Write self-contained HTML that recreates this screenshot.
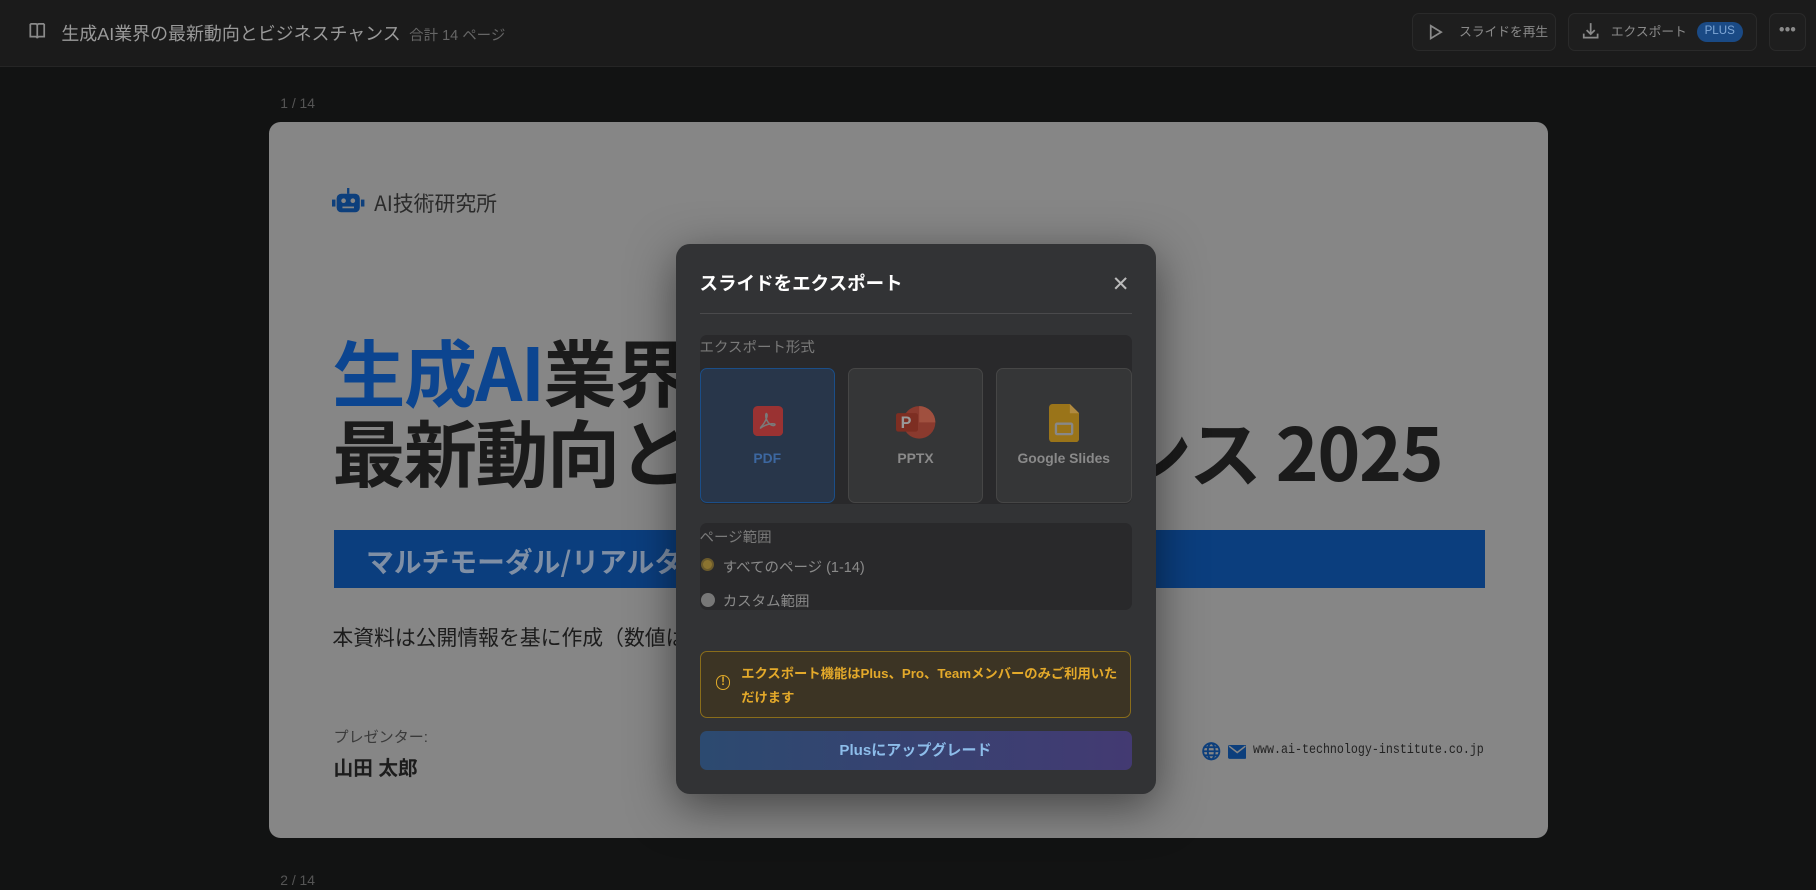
<!DOCTYPE html>
<html><head><meta charset="utf-8"><style>
html{zoom:1.158163}
body{margin:0;width:1568px;height:768px;overflow:hidden;background:#121313;font-family:"Liberation Sans","Noto Sans CJK JP",sans-serif;position:relative}
.a{position:absolute;white-space:nowrap}
.top{position:absolute;left:0;top:0;width:1568px;height:57px;background:#1b1b1b;border-bottom:1px solid #252525}
.btn{position:absolute;top:11px;height:31px;border:1px solid #2a2a2a;border-radius:6px;background:#1e1e1e;color:#8a8a8a;font-size:11px;line-height:31px}
.slide{position:absolute;left:232px;top:105px;width:1105px;height:619px;background:#868686;border-radius:10px}
.modal{position:absolute;left:584px;top:211px;width:414px;height:475px;background:#323335;border-radius:12px;box-shadow:0 10px 40px rgba(0,0,0,.5)}
.card{position:absolute;top:318px;width:117px;height:116px;border-radius:6px;background:#353637;border:1px solid #464646;box-sizing:border-box}
.card span{position:absolute;left:0;right:0;top:70px;text-align:center;font-size:12px;font-weight:bold;color:#8a8a8a}
</style></head><body>
<div class="top"></div>
<svg class="a" style="left:24px;top:18px" width="16" height="17" viewBox="0 0 16 17" fill="none" stroke="#8a8a8a" stroke-width="1.5"><path d="M8 3v12M2 2.5h4.5Q8 2.5 8 4M14 2.5H9.5Q8 2.5 8 4M2 2.5v11h4.5Q8 13.5 8 15M14 2.5v11H9.5Q8 13.5 8 15"/></svg>
<div class="a" style="left:53px;top:17px;font-size:15.5px;color:#9a9a9a">生成AI業界の最新動向とビジネスチャンス <span style="font-size:12.5px;color:#666;margin-left:3px">合計 14 ページ</span></div>
<div class="btn" style="left:1219px;width:123px"><svg class="a" style="left:14px;top:9px" width="12" height="14" viewBox="0 0 12 14" fill="none" stroke="#8a8a8a" stroke-width="1.5"><path d="M1.5 1.5l9 5.5-9 5.5z"/></svg><span class="a" style="left:40px">スライドを再生</span></div>
<div class="btn" style="left:1354px;width:161px"><svg class="a" style="left:11px;top:7px" width="15" height="15" viewBox="0 0 15 15" fill="none" stroke="#8a8a8a" stroke-width="1.5"><path d="M7.5 1v9M4 7l3.5 3.5L11 7M1.5 10v3.5h12V10"/></svg><span class="a" style="left:36px">エクスポート</span><span class="a" style="left:110px;top:7px;width:40px;height:17px;border-radius:9px;background:#1a4a85;color:#7fa7d6;font-size:10px;line-height:17px;text-align:center">PLUS</span></div>
<div class="btn" style="left:1527px;width:31px;text-align:center;font-size:14px;line-height:28px">•••</div>
<div class="a" style="left:242px;top:82px;font-size:12px;color:#555">1 / 14</div>
<div class="a" style="left:242px;top:753px;font-size:12px;color:#555">2 / 14</div>
<div class="slide">
<svg class="a" style="left:55px;top:57px" width="28" height="22" viewBox="0 0 28 22"><rect x="4" y="5" width="20" height="16" rx="4" fill="#0d3f7c"/><rect x="0" y="10" width="3" height="6" fill="#0d3f7c"/><rect x="25" y="10" width="3" height="6" fill="#0d3f7c"/><rect x="13" y="0" width="2" height="5" fill="#0d3f7c"/><circle cx="10" cy="11" r="2" fill="#868686"/><circle cx="18" cy="11" r="2" fill="#868686"/><rect x="9" y="16" width="10" height="1.5" fill="#868686"/></svg>
<div class="a" style="left:91px;top:57px;font-size:18px;color:#2a2a2a;font-family:'Noto Sans CJK JP',sans-serif">AI技術研究所</div>
<div class="a" style="left:55px;top:181px;font-size:63px;font-weight:bold;line-height:69px;color:#1b1b1b;letter-spacing:-1.2px;font-family:'Noto Sans CJK JP',sans-serif"><span style="color:#0c4590">生成AI</span>業界の<br>最新動向とビジネスチャンス 2025</div>
<div class="a" style="left:56px;top:353px;width:994px;height:50px;background:#0b3e7e"></div>
<div class="a" style="left:84px;top:362px;font-size:24px;font-weight:bold;color:#7f8fa5;font-family:'Noto Sans CJK JP',sans-serif">マルチモーダル/リアルタイム</div>
<div class="a" style="left:55px;top:432px;font-size:18px;color:#1c1c1c">本資料は公開情報を基に作成（数値は推</div>
<div class="a" style="left:56px;top:522px;font-size:13px;color:#3a3a3a">プレゼンター:</div>
<div class="a" style="left:56px;top:544px;font-size:17px;font-weight:bold;color:#1c1c1c">山田 太郎</div>
<svg class="a" style="left:806px;top:536px" width="16" height="16" viewBox="0 0 16 16" fill="none" stroke="#0d3f7c" stroke-width="1.6"><circle cx="8" cy="8" r="7"/><ellipse cx="8" cy="8" rx="3" ry="7"/><path d="M1 8h14M2 4.5h12M2 11.5h12"/></svg>
<svg class="a" style="left:828px;top:538px" width="16" height="12" viewBox="0 0 16 12"><rect width="16" height="12" rx="1.5" fill="#0d3f7c"/><path d="M1 1l7 5.5L15 1" stroke="#868686" stroke-width="1.3" fill="none"/></svg>
<div class="a" style="left:850px;top:536px;font-family:'Liberation Mono',monospace;font-size:12px;color:#222;transform:scaleX(0.84);transform-origin:left"> www.ai-technology-institute.co.jp</div>
</div>
<div class="modal"></div>
<div class="a" style="left:604px;top:233px;font-size:16px;font-weight:bold;color:#fff">スライドをエクスポート</div>
<div class="a" style="left:960px;top:235px;font-size:18px;color:#bbb">✕</div>
<div class="a" style="left:604px;top:270px;width:373px;height:1px;background:#4a4a4c"></div>
<div class="a" style="left:604px;top:289px;width:373px;height:146px;background:#29292b;border-radius:6px"></div>
<div class="a" style="left:604px;top:290px;font-size:12.5px;color:#7a7a7a">エクスポート形式</div>
<div class="card" style="left:604px;background:#28364a;border-color:#1b4e88"><svg class="a" style="left:45px;top:32px" width="26" height="26" viewBox="0 0 26 26"><rect width="26" height="26" rx="4" fill="#9a3232"/><path d="M7 18c3-3 6-9 5-11s-2 3 1 7 6 3 6 2-5-1-9 1-4 3-3 1z" fill="none" stroke="#7a7a7a" stroke-width="1.3"/></svg><span style="color:#3c67a0">PDF</span></div>
<div class="card" style="left:732px"><svg class="a" style="left:41px;top:31px" width="34" height="30" viewBox="0 0 34 30"><circle cx="20" cy="15" r="14" fill="#8a3a2e"/><path d="M20 1a14 14 0 0 1 14 14H20z" fill="#a0503f"/><rect x="0" y="7" width="19" height="16" rx="2" fill="#7d2e22"/><text x="4" y="20" font-family="Liberation Sans" font-weight="bold" font-size="14" fill="#999">P</text></svg><span>PPTX</span></div>
<div class="card" style="left:860px"><svg class="a" style="left:45px;top:30px" width="26" height="33" viewBox="0 0 26 33"><path d="M3 0h15l8 8v22a3 3 0 0 1-3 3H3a3 3 0 0 1-3-3V3a3 3 0 0 1 3-3z" fill="#9a7419"/><path d="M18 0v8h8z" fill="#b08a40"/><rect x="6" y="17" width="14" height="9" rx="1" fill="none" stroke="#888" stroke-width="2"/></svg><span>Google Slides</span></div>
<div class="a" style="left:604px;top:452px;width:373px;height:75px;background:#29292b;border-radius:6px"></div>
<div class="a" style="left:604px;top:454px;font-size:12.5px;color:#7a7a7a">ページ範囲</div>
<div class="a" style="left:605px;top:482px;width:8px;height:8px;border-radius:50%;background:#8b7330;border:2px solid #6b5a2b"></div>
<div class="a" style="left:624px;top:480px;font-size:12.5px;color:#8a8a8a">すべてのページ (1-14)</div>
<div class="a" style="left:605px;top:512px;width:12px;height:12px;border-radius:50%;background:#777"></div>
<div class="a" style="left:624px;top:509px;font-size:12.5px;color:#8a8a8a">カスタム範囲</div>
<div class="a" style="left:604px;top:562px;width:371px;height:56px;background:#3c3424;border:1px solid #8a6d1a;border-radius:6px"></div>
<div class="a" style="left:618px;top:583px;width:11px;height:11px;border:1.5px solid #e0aa2a;border-radius:50%;color:#e0aa2a;font-size:10px;font-weight:bold;line-height:11px;text-align:center">!</div>
<div class="a" style="left:640px;top:572px;font-size:11.5px;font-weight:bold;color:#e3a92a;line-height:20px">エクスポート機能はPlus、Pro、Teamメンバーのみご利用いた<br>だけます</div>
<div class="a" style="left:604px;top:631px;width:373px;height:34px;border-radius:6px;background:linear-gradient(90deg,#2c4a70,#433a72);color:#8dbdea;font-size:13px;font-weight:bold;text-align:center;line-height:34px">Plusにアップグレード</div>
</body></html>
